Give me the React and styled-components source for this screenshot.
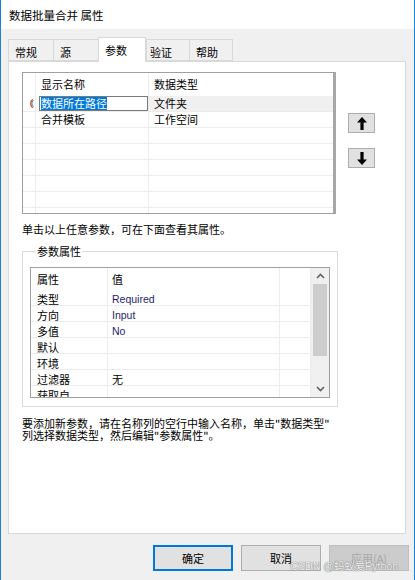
import React from "react";
import styled, { createGlobalStyle } from "styled-components";

const GlobalStyle = createGlobalStyle`
  * { box-sizing: border-box; }
  html, body {
    margin: 0;
    padding: 0;
    background: #f0f0f0;
  }
  body {
    font-family: "Noto Sans CJK SC", "Noto Sans", sans-serif;
    font-size: 11px;
    color: #000;
  }
`;

const Window = styled.div`
  position: relative;
  width: 415px;
  height: 580px;
  display: flex;
  flex-direction: column;
  background: #f0f0f0;
  border-left: 1px solid #1883d7;
  border-right: 1px solid #1883d7;
  overflow: hidden;
`;

const TitleBar = styled.div`
  height: 29px;
  display: flex;
  align-items: center;
  padding-left: 8px;
  background: #fff;
  font-size: 11.5px;
`;

const Body = styled.div`
  padding: 10px 8px 0 7px;
  display: flex;
  flex-direction: column;
`;

const TabStrip = styled.div`
  display: flex;
  align-items: flex-end;
  height: 22px;
  position: relative;
  z-index: 1;
`;

const Tab = styled.div`
  width: ${(p) => p.$w}px;
  height: ${(p) => (p.$active ? 25 : 22)}px;
  margin-bottom: ${(p) => (p.$active ? -1 : 0)}px;
  padding: 5px 0 0 ${(p) => p.$pad}px;
  background: ${(p) => (p.$active ? "#fff" : "#f0f0f0")};
  border: 1px solid #d9d9d9;
  border-bottom: ${(p) => (p.$active ? "none" : "1px solid #d9d9d9")};
  border-right: ${(p) => (p.$last || p.$active ? "1px solid #d9d9d9" : "none")};
  line-height: 14px;
`;

const Panel = styled.div`
  height: 473px;
  background: #fff;
  border: 1px solid #d9d9d9;
  padding: 10px 0 0 13px;
  display: flex;
  flex-direction: column;
`;

const TopRow = styled.div`
  display: flex;
`;

const ParamGrid = styled.div`
  width: 314px;
  height: 142px;
  border: 1px solid #a0a0a0;
  border-right: 3px solid #a7a7a7;
  overflow: hidden;
  background: #fff;
`;

const GridRow = styled.div`
  display: grid;
  grid-template-columns: 13px 113px 1fr;
  height: ${(p) => (p.$head ? 23 : 16)}px;
  border-bottom: ${(p) => (p.$head ? "none" : "1px solid #ececec")};
  line-height: 15px;
`;

const Cell = styled.div`
  border-right: ${(p) => (p.$last ? "none" : "1px solid #ececec")};
  padding-left: ${(p) => p.$pad || 0}px;
  background: ${(p) => (p.$shade ? "#f0f0f0" : "transparent")};
  display: flex;
  align-items: center;
  white-space: nowrap;
  overflow: hidden;
`;

const EditBox = styled.div`
  flex: 1;
  align-self: stretch;
  margin-left: 3px;
  border: 1px solid #7a7a7a;
  padding-left: 1px;
  display: flex;
  align-items: center;
`;

const Selected = styled.span`
  background: #0078d7;
  color: #fff;
  line-height: 13px;
`;

const ArrowColumn = styled.div`
  margin-left: 12px;
  padding-top: 41px;
  display: flex;
  flex-direction: column;
  gap: 15px;
`;

const ArrowButton = styled.button`
  width: 27px;
  height: 20px;
  padding: 0;
  background: #e1e1e1;
  border: 1px solid #adadad;
  display: flex;
  align-items: center;
  justify-content: center;
`;

const Hint = styled.div`
  margin-top: 8px;
  line-height: 14px;
`;

const GroupBox = styled.fieldset`
  width: 316px;
  margin: 8px 0 0;
  padding: 9px 7px 8px;
  border: 1px solid #dcdcdc;
`;

const GroupTitle = styled.legend`
  margin-left: 6px;
  padding: 0 1px;
  line-height: 14px;
`;

const PropGrid = styled.div`
  height: 131px;
  border: 1px solid #a0a0a0;
  display: flex;
  overflow: hidden;
`;

const PropRows = styled.div`
  flex: 1;
  overflow: hidden;
`;

const PropRow = styled.div`
  display: grid;
  grid-template-columns: 77px 172px 1fr;
  height: ${(p) => (p.$head ? 22 : 16)}px;
  border-bottom: ${(p) => (p.$head ? "none" : "1px solid #ececec")};
  line-height: 15px;
`;

const PropCell = styled.div`
  border-right: 1px solid #ececec;
  padding-left: ${(p) => p.$pad || 0}px;
  padding-top: ${(p) => (p.$low ? 2 : 0)}px;
  display: flex;
  align-items: center;
  white-space: nowrap;
  font-family: ${(p) =>
    p.$latin ? '"Liberation Sans", "Noto Sans", sans-serif' : "inherit"};
  font-size: ${(p) => (p.$latin ? 10.5 : 11)}px;
  color: ${(p) => (p.$latin ? "#1e1e6e" : "#000")};
`;

const ScrollBar = styled.div`
  width: 18px;
  background: #f0f0f0;
  display: flex;
  flex-direction: column;
  align-items: center;
  padding: 0 1px;
`;

const ScrollArrow = styled.div`
  height: 16px;
  display: flex;
  align-items: center;
  justify-content: center;
`;

const Thumb = styled.div`
  width: 14px;
  height: 72px;
  background: #cdcdcd;
`;

const Spacer = styled.div`
  flex: 1;
`;

const Note = styled.div`
  margin-top: 10px;
  line-height: 12px;
`;

const ButtonRow = styled.div`
  margin-top: 11px;
  padding-right: 5px;
  display: flex;
  justify-content: flex-end;
  gap: 8px;
`;

const DialogButton = styled.button`
  width: 80px;
  height: 26px;
  padding: 0;
  font-family: inherit;
  font-size: 11px;
  background: ${(p) => (p.disabled ? "#cccccc" : "#e1e1e1")};
  color: ${(p) => (p.disabled ? "#a8a8a8" : "#000")};
  border: ${(p) =>
    p.$default
      ? "2px solid #0078d7"
      : p.disabled
      ? "1px solid #bfbfbf"
      : "1px solid #adadad"};
`;

const Watermark = styled.div`
  position: absolute;
  right: 16px;
  bottom: 7px;
  font-family: "Liberation Sans", "Noto Sans CJK SC", sans-serif;
  font-size: 10.5px;
  color: rgba(255, 255, 255, 0.92);
  text-shadow: 0 0 1px #7a7a7a, 0 0 1px #7a7a7a;
  pointer-events: none;
`;

const tabs = [
  { label: "常规", w: 45, pad: 6 },
  { label: "源", w: 45, pad: 6 },
  { label: "参数", w: 48, pad: 6, active: true },
  { label: "验证", w: 43, pad: 3 },
  { label: "帮助", w: 44, pad: 6 },
];

const params = [
  { name: "数据所在路径", type: "文件夹", editing: true },
  { name: "合并模板", type: "工作空间" },
  {},
  {},
  {},
  {},
  {},
  {},
];

const props = [
  ["类型", "Required", true],
  ["方向", "Input", true],
  ["多值", "No", true],
  ["默认", ""],
  ["环境", ""],
  ["过滤器", "无"],
  ["获取自", ""],
];

function Arrow({ down }) {
  return (
    <svg width="10" height="13" viewBox="0 0 10 13">
      <path
        d="M5 0 L10 5.5 H6.6 V13 H3.4 V5.5 H0 Z"
        fill="#000"
        transform={down ? "rotate(180 5 6.5)" : undefined}
      />
    </svg>
  );
}

function Chevron({ down }) {
  return (
    <svg width="9" height="6" viewBox="0 0 9 6">
      <path
        d={down ? "M1 1 L4.5 4.5 L8 1" : "M1 5 L4.5 1.5 L8 5"}
        fill="none"
        stroke="#606060"
        strokeWidth="1.6"
      />
    </svg>
  );
}

function RowMarker() {
  return (
    <svg width="5" height="9" viewBox="0 0 5 9">
      <path d="M4 0.5 C1 1.5 1 7.5 4 8.5" fill="none" stroke="#c05020" strokeWidth="1.2" />
      <path d="M4.5 1.5 C2.5 3 2.5 6 4.5 7.5" fill="none" stroke="#3a6fc0" strokeWidth="1" />
    </svg>
  );
}

export default function App() {
  return (
    <>
      <GlobalStyle />
      <Window>
        <TitleBar>数据批量合并 属性</TitleBar>
        <Body>
          <TabStrip>
            {tabs.map((t, i) => (
              <Tab
                key={t.label}
                $w={t.w}
                $pad={t.pad}
                $active={t.active}
                $last={i === tabs.length - 1}
              >
                {t.label}
              </Tab>
            ))}
          </TabStrip>
          <Panel>
            <TopRow>
              <ParamGrid>
                <GridRow $head>
                  <Cell />
                  <Cell $pad={5}>显示名称</Cell>
                  <Cell $pad={5} $last>数据类型</Cell>
                </GridRow>
                {params.map((p, i) => (
                  <GridRow key={i}>
                    <Cell $pad={6}>{p.editing && <RowMarker />}</Cell>
                    <Cell $pad={p.editing ? 0 : 5}>
                      {p.editing ? (
                        <EditBox>
                          <Selected>{p.name}</Selected>
                        </EditBox>
                      ) : (
                        p.name
                      )}
                    </Cell>
                    <Cell $pad={5} $last $shade={p.editing}>
                      {p.type}
                    </Cell>
                  </GridRow>
                ))}
              </ParamGrid>
              <ArrowColumn>
                <ArrowButton>
                  <Arrow />
                </ArrowButton>
                <ArrowButton>
                  <Arrow down />
                </ArrowButton>
              </ArrowColumn>
            </TopRow>

            <Hint>单击以上任意参数，可在下面查看其属性。</Hint>

            <GroupBox>
              <GroupTitle>参数属性</GroupTitle>
              <PropGrid>
                <PropRows>
                  <PropRow $head>
                    <PropCell $pad={6}>属性</PropCell>
                    <PropCell $pad={4}>值</PropCell>
                    <PropCell />
                  </PropRow>
                  {props.map(([label, value, latin]) => (
                    <PropRow key={label}>
                      <PropCell $pad={6} $low>{label}</PropCell>
                      <PropCell $pad={4} $low $latin={latin}>
                        {value}
                      </PropCell>
                      <PropCell />
                    </PropRow>
                  ))}
                </PropRows>
                <ScrollBar>
                  <ScrollArrow>
                    <Chevron />
                  </ScrollArrow>
                  <Thumb />
                  <Spacer />
                  <ScrollArrow>
                    <Chevron down />
                  </ScrollArrow>
                </ScrollBar>
              </PropGrid>
            </GroupBox>

            <Note>
              要添加新参数，请在名称列的空行中输入名称，单击"数据类型"
              <br />
              列选择数据类型，然后编辑"参数属性"。
            </Note>
          </Panel>
        </Body>
        <ButtonRow>
          <DialogButton $default>确定</DialogButton>
          <DialogButton>取消</DialogButton>
          <DialogButton disabled>应用(A)</DialogButton>
        </ButtonRow>
        <Watermark>CSDN @蚂蚁爱Python</Watermark>
      </Window>
    </>
  );
}
